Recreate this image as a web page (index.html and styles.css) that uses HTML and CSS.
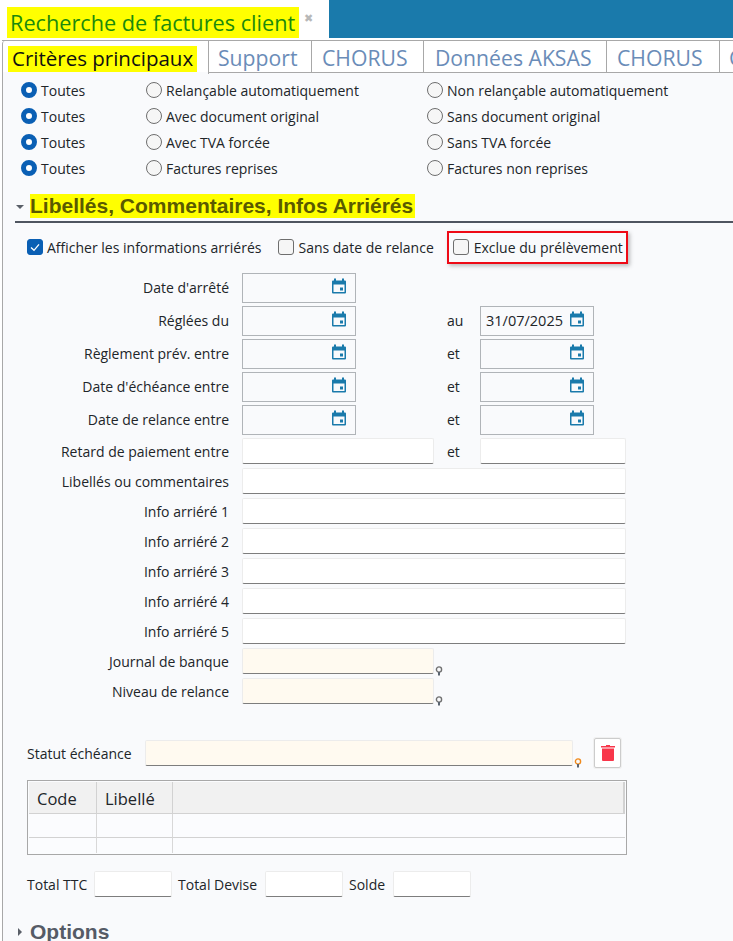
FILE: index.html
```html
<!DOCTYPE html>
<html lang="fr">
<head>
<meta charset="utf-8">
<title>Recherche de factures client</title>
<link rel="stylesheet" href="styles.css">
</head>
<body>
<svg class="defs" width="0" height="0" aria-hidden="true">
  <symbol id="cal" viewBox="0 0 16 16">
    <path fill="#1a7aab" d="M3 0h2v2h6V0h2v2h1a1 1 0 0 1 1 1v11a1 1 0 0 1-1 1H2a1 1 0 0 1-1-1V3a1 1 0 0 1 1-1h1zM2.500 6v7.500h11V6z"/>
    <rect fill="#1a7aab" x="9" y="9" width="3" height="3"/>
  </symbol>
  <symbol id="bulb" viewBox="0 0 8 10">
    <circle cx="4" cy="3.500" r="2.600" fill="none" stroke="currentColor" stroke-width="1.400"/>
    <rect x="3" y="6" width="2" height="3.500" fill="#5a6470"/>
  </symbol>
</svg>
<header class="titlebar">
  <div class="title-tab">
    <span class="title-text">Recherche de factures client</span>
    <span class="close">&#10006;</span>
  </div>
  <div class="title-fill"></div>
</header>
<nav class="tabs">
  <div class="tab active w1"><span>Critères principaux</span></div>
  <div class="tab w2">Support</div>
  <div class="tab w3">CHORUS</div>
  <div class="tab w4">Données AKSAS</div>
  <div class="tab w5">CHORUS</div>
  <div class="tab w6">C</div>
</nav>
<main class="panel">
  <section class="radios">
    <div class="radio-row"><label class="opt c1"><i class="radio on"></i>Toutes</label><label class="opt c2"><i class="radio"></i>Relançable automatiquement</label><label class="opt"><i class="radio"></i>Non relançable automatiquement</label></div>
    <div class="radio-row"><label class="opt c1"><i class="radio on"></i>Toutes</label><label class="opt c2"><i class="radio"></i>Avec document original</label><label class="opt"><i class="radio"></i>Sans document original</label></div>
    <div class="radio-row"><label class="opt c1"><i class="radio on"></i>Toutes</label><label class="opt c2"><i class="radio"></i>Avec TVA forcée</label><label class="opt"><i class="radio"></i>Sans TVA forcée</label></div>
    <div class="radio-row"><label class="opt c1"><i class="radio on"></i>Toutes</label><label class="opt c2"><i class="radio"></i>Factures reprises</label><label class="opt"><i class="radio"></i>Factures non reprises</label></div>
  </section>

  <h2 class="section-head"><i class="caret down"></i><span class="mark">Libellés, Commentaires, Infos Arriérés</span></h2>

  <div class="checks">
    <label class="opt chk"><i class="check on"><svg viewBox="0 0 16 16" width="16" height="16"><path d="M4 8.500l3 2.800 5-6" fill="none" stroke="#fff" stroke-width="1.300"/></svg></i>Afficher les informations arriérés</label>
    <label class="opt chk"><i class="check"></i>Sans date de relance</label>
    <label class="opt chk boxed"><i class="check"></i>Exclue du prélèvement</label>
  </div>

  <div class="form">
    <div class="row date"><span class="lbl">Date d'arrêté</span><div class="in dt"><svg class="ic"><use href="#cal"/></svg></div></div>
    <div class="row date"><span class="lbl">Réglées du</span><div class="in dt"><svg class="ic"><use href="#cal"/></svg></div><span class="mid">au</span><div class="in dt">31/07/2025<svg class="ic"><use href="#cal"/></svg></div></div>
    <div class="row date"><span class="lbl">Règlement prév. entre</span><div class="in dt"><svg class="ic"><use href="#cal"/></svg></div><span class="mid">et</span><div class="in dt"><svg class="ic"><use href="#cal"/></svg></div></div>
    <div class="row date"><span class="lbl">Date d'échéance entre</span><div class="in dt"><svg class="ic"><use href="#cal"/></svg></div><span class="mid">et</span><div class="in dt"><svg class="ic"><use href="#cal"/></svg></div></div>
    <div class="row date"><span class="lbl">Date de relance entre</span><div class="in dt"><svg class="ic"><use href="#cal"/></svg></div><span class="mid">et</span><div class="in dt"><svg class="ic"><use href="#cal"/></svg></div></div>
    <div class="row"><span class="lbl">Retard de paiement entre</span><div class="in tx short"></div><span class="mid">et</span><div class="in tx end"></div></div>
    <div class="row"><span class="lbl">Libellés ou commentaires</span><div class="in tx wide"></div></div>
    <div class="row"><span class="lbl">Info arriéré 1</span><div class="in tx wide"></div></div>
    <div class="row"><span class="lbl">Info arriéré 2</span><div class="in tx wide"></div></div>
    <div class="row"><span class="lbl">Info arriéré 3</span><div class="in tx wide"></div></div>
    <div class="row"><span class="lbl">Info arriéré 4</span><div class="in tx wide"></div></div>
    <div class="row"><span class="lbl">Info arriéré 5</span><div class="in tx wide"></div></div>
    <div class="row"><span class="lbl">Journal de banque</span><div class="in tx short pick"></div><svg class="bulb grey"><use href="#bulb"/></svg></div>
    <div class="row"><span class="lbl">Niveau de relance</span><div class="in tx short pick"></div><svg class="bulb grey"><use href="#bulb"/></svg></div>
  </div>

  <div class="statut">
    <span class="statut-lbl">Statut échéance</span>
    <div class="in tx pick statut-in"></div>
    <svg class="bulb orange"><use href="#bulb"/></svg>
    <button class="trash" type="button" aria-label="Supprimer">
      <svg viewBox="0 0 14 16" width="14" height="16"><path fill="#f8364a" d="M5 0h4v1h5v1.500H0V1h5zM1 3.500h12V15a1 1 0 0 1-1 1H2a1 1 0 0 1-1-1z"/></svg>
    </button>
  </div>

  <table class="grid">
    <thead><tr><th class="col1">Code</th><th class="col2">Libellé</th><th></th></tr></thead>
    <tbody>
      <tr class="r1"><td></td><td></td><td></td></tr>
      <tr class="r2"><td></td><td></td><td></td></tr>
    </tbody>
  </table>

  <div class="totals">
    <span class="t1">Total TTC</span><div class="in tx tot"></div>
    <span class="t2">Total Devise</span><div class="in tx tot"></div>
    <span class="t3">Solde</span><div class="in tx tot"></div>
  </div>

  <h2 class="options"><i class="caret right"></i>Options</h2>
</main>
</body>
</html>
```
FILE: styles.css
```css
* { box-sizing: border-box; }
html, body { margin: 0; padding: 0; height: 941px; overflow: hidden; background: #fff; }
body { font-family: "Open Sans", "Noto Sans", sans-serif; font-size: 14px; color: #212529; }
.defs { position: absolute; }

.titlebar { display: flex; height: 38px; }
.title-tab { width: 329px; display: flex; padding-left: 7px; padding-top: 7px; }
.title-text { height: 31px; width: 292px; background: #ffff00; color: #1b8a0c; font-size: 21.700px; line-height: 31px; padding-left: 3px; white-space: nowrap; }
.close { color: #b8b8b8; font-size: 11px; line-height: 20px; margin-left: 5px; margin-top: 2px; font-family: "DejaVu Sans", sans-serif; }
.title-fill { flex: 1; background: #1a7aab; }

.tabs { position: relative; z-index: 1; display: flex; height: 34px; margin-top: 2px; margin-left: 2px; border-top: 1px solid #a8a8a8; overflow: hidden; }
.tab { height: 32px; border-right: 1px solid #a8a8a8; border-bottom: 1px solid #a8a8a8; color: #6a8cb8; font-size: 21.200px; line-height: 33px; text-align: left; padding-left: 10px; white-space: nowrap; flex: none; }
.tab.active { color: #111; border-bottom: 0; height: 33px; border-left: 1px solid #a8a8a8; border-radius: 3px 0 0 0; padding: 5px 0 0 5px; }
.tab.active span { display: block; width: 189px; height: 26px; background: #ffff00; line-height: 25px; padding-left: 4px; font-size: 20.500px; }
.w1 { width: 207px; }
.w2 { width: 103px; padding-left: 9px; }
.w3 { width: 112px; }
.w4 { width: 183px; padding-left: 11px; }
.w5 { width: 113px; }
.w6 { width: 40px; padding-left: 9px; }

.panel { margin-top: -2px; margin-left: 2px; height: 869px; background: #f9fafc; border-left: 1px solid #a8a8a8; padding-top: 5px; }

.radios { height: 104px; }
.radio-row { display: flex; height: 26px; padding-left: 18px; align-items: center; }
.opt { display: flex; align-items: center; white-space: nowrap; }
.c1 { width: 125px; }
.c2 { width: 281px; }
.radio { width: 16px; height: 16px; border-radius: 50%; border: 1px solid #6e6e6e; background: #f6f6f6; margin-right: 4px; flex: none; }
.radio.on { border: 5px solid #0a5fb4; background: #fff; }

.section-head { margin: 13px 0 0 12px; height: 29px; border-bottom: 2px solid #4f5560; font: bold 21px/24px "Liberation Sans", sans-serif; color: #5a5a00; display: flex; align-items: flex-start; }
.mark { background: #ffff00; height: 24px; padding: 0 2px 0 0; margin-left: 6px; white-space: nowrap; }
.caret { display: block; width: 0; height: 0; flex: none; }
.caret.down { border: 4px solid transparent; border-top: 4px solid #5a5f68; border-bottom: 0; margin-top: 11px; margin-left: 1px; }
.caret.right { border: 4px solid transparent; border-left: 4px solid #5a5f68; border-right: 0; margin-right: 9px; margin-left: 2px; }

.checks { display: flex; align-items: center; padding-left: 24px; height: 34px; margin-top: 7px; }
.chk { margin-right: 17px; }
.check { width: 16px; height: 16px; border-radius: 3px; border: 1px solid #6e6e6e; background: #f6f6f6; margin-right: 4px; flex: none; display: block; }
.check.on { background: #0a5fb4; border-color: #0a5fb4; }
.check.on svg { display: block; margin: -1px; }
.boxed { position: relative; margin-left: -4px; margin-right: 0; height: 33px; width: 181px; border: 2px solid #ee0a16; padding-left: 4px; box-shadow: 2px 2px 4px rgba(0,0,0,.25); }
.boxed .check { margin-right: 5px; }

.form { margin-top: 7px; }
.row { display: flex; align-items: center; height: 30px; }
.row.date { height: 33px; }
.lbl { width: 226px; text-align: right; margin-right: 13px; white-space: nowrap; flex: none; }
.mid { width: 46px; padding-left: 13px; flex: none; }
.date .mid { margin-left: 91px; width: 33px; padding-left: 0; }
.in { flex: none; }
.dt { width: 114px; height: 30px; border: 1px solid #b0b4b8; display: flex; align-items: center; padding-left: 5px; position: relative; font-size: 14.500px; }
.ic { width: 16px; height: 17px; position: absolute; right: 8px; top: 4px; }
.tx { height: 26px; background: #fff; border: 1px solid #ececec; border-bottom: 1px solid #7d7d7d; border-radius: 2px; }
.short { width: 192px; }
.end { width: 146px; }
.wide { width: 384px; }
.pick { background: #fffaf0; }
.bulb { width: 8px; height: 10px; flex: none; margin: 20px 0 0 0; position: relative; top: 0; left: 1px; }
.bulb.grey { color: #707070; }
.bulb.orange { color: #f08a1c; margin-left: 1px; top: 0; left: 0; }

.statut { display: flex; align-items: center; margin-top: 31px; padding-left: 24px; height: 32px; }
.statut-lbl { width: 118px; flex: none; white-space: nowrap; }
.statut-in { width: 428px; }
.trash { width: 27px; height: 30px; margin-left: 12px; background: #fff; border: 1px solid #ccc; box-shadow: 0 0 0 1px #f0f0f0; border-radius: 2px; padding: 0; display: flex; align-items: center; justify-content: center; }

.grid { margin: 11px 0 0 24px; width: 600px; height: 75px; border: 1px solid #a8a8a8; border-collapse: separate; border-spacing: 0; table-layout: fixed; background: #fbfcfe; padding: 1px; }
.grid th { height: 32px; background: #f1f1f1; font-weight: normal; font-size: 16.500px; text-align: left; padding: 2px 0 0 8px; border-right: 1px solid #d2d2d2; border-bottom: 1px solid #d2d2d2; border-left: 0; }
.grid th:last-child { border-right: 2px solid #d2d2d2; }
.grid td { border-right: 1px solid #d8d8d8; padding: 0; }
.grid td:last-child { border-right: 0; }
.grid .r1 td { height: 23px; border-bottom: 1px solid #d2d2d2; }
.grid .r2 td { height: 15px; }
.col1 { width: 68px; }
.col2 { width: 76px; }

.totals { display: flex; align-items: center; height: 26px; margin-top: 16px; padding-left: 24px; }
.totals span { white-space: nowrap; flex: none; }
.t1 { width: 67px; }
.t2 { width: 87px; }
.t3 { width: 44px; }
.tot { width: 78px; margin-right: 6px; }

.options { margin: 23px 0 0 13px; display: flex; align-items: center; height: 24px; font: bold 21px/24px "Liberation Sans", sans-serif; color: #555b66; }
.caret.right { margin-right: 8px; }
```
